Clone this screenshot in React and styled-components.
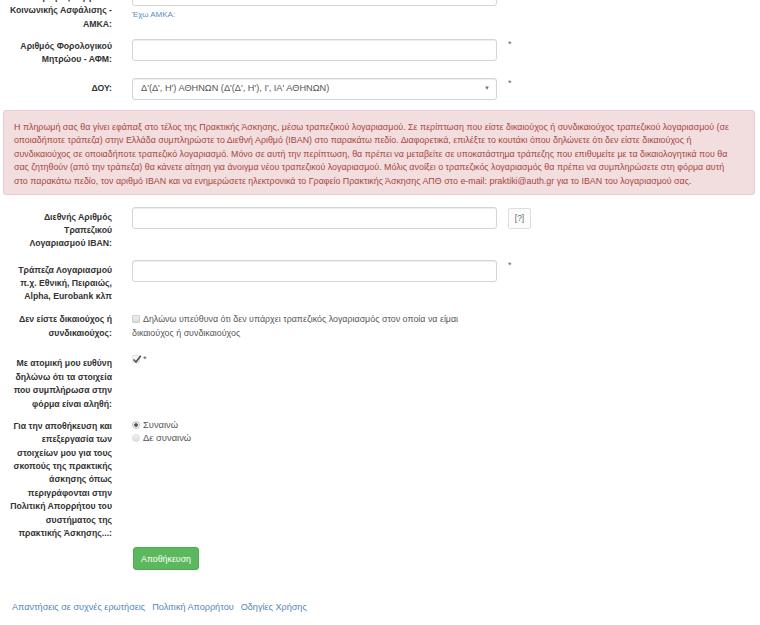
import React from "react";
import styled, { createGlobalStyle } from "styled-components";

const Global = createGlobalStyle`
  html, body { margin: 0; padding: 0; background: #fff; }
  body {
    font-family: "Liberation Sans", Arial, sans-serif;
    font-size: 9.4px;
    line-height: 13.4px;
    color: #333;
  }
`;

const Page = styled.div`
  width: 760px;
  margin-top: -16px;
  display: flow-root;
`;

const Row = styled.div`
  display: flex;
  align-items: flex-start;
  margin-top: ${(p) => p.$mt || 0}px;
`;

const Label = styled.div`
  width: 112px;
  flex: none;
  text-align: right;
  font-weight: bold;
  font-size: 8.7px;
  color: #333;
  padding-top: ${(p) => p.$pt || 0}px;
  white-space: nowrap;
`;

const Field = styled.div`
  width: 365px;
  flex: none;
  margin-left: 20px;
`;

const Side = styled.div`
  margin-left: ${(p) => (p.$ml != null ? p.$ml : 11)}px;
  flex: none;
`;

const Input = styled.div`
  box-sizing: border-box;
  height: 22px;
  border: 1px solid #d4d4d4;
  border-radius: 3px;
  background: #fff;
  box-shadow: inset 0 1px 1px rgba(0, 0, 0, 0.075);
`;

const Select = styled(Input)`
  display: flex;
  align-items: center;
  justify-content: space-between;
  padding: 0 6px 0 8px;
  color: #555;
  font-size: 9.2px;
  white-space: nowrap;
`;

const Caret = styled.span`
  font-size: 6px;
  color: #777;
`;

const Star = styled.span`
  color: #666;
  font-size: 9px;
  line-height: 10px;
  display: block;
`;

const HelpLink = styled.a`
  display: block;
  margin-top: 2px;
  font-size: 8px;
  color: #5b8dbd;
  text-decoration: none;
`;

const HelpBtn = styled.span`
  display: inline-flex;
  align-items: center;
  justify-content: center;
  box-sizing: border-box;
  width: 23px;
  height: 21px;
  margin-top: 1px;
  border: 1px solid #ddd;
  border-radius: 2px;
  background: #fcfcfc;
  color: #666;
  font-size: 8.5px;
`;

const Alert = styled.div`
  margin: 10px 5px 0 3px;
  box-sizing: border-box;
  height: 85px;
  padding: 10px 10px 5px 10px;
  background: #f2dede;
  border: 1px solid #ebccd1;
  border-radius: 3px;
  color: #a94442;
  font-size: 8.9px;
  line-height: 13.4px;
  white-space: nowrap;
  overflow: hidden;
`;

const Line = styled.div``;

const Check = styled.div`
  color: #555;
  line-height: 13.4px;
  font-size: ${(p) => p.$fs || 9.4}px;
`;

const Box = styled.span`
  display: inline-block;
  box-sizing: border-box;
  width: 8px;
  height: 8px;
  margin-right: 3px;
  vertical-align: -1px;
  border: 1px solid ${(p) => (p.$on ? "#e2e2e2" : "#cfcfcf")};
  border-radius: 1px;
  background: ${(p) => (p.$on ? "#f4f4f4" : "linear-gradient(#f0f0f0, #d9d9d9)")};
  position: relative;
`;

const Tick = styled.svg`
  position: absolute;
  left: -1px;
  top: -2px;
`;

const Dot = styled.span`
  display: inline-block;
  box-sizing: border-box;
  width: 8px;
  height: 8px;
  margin-right: 3px;
  vertical-align: -1px;
  border-radius: 50%;
  border: 1px solid ${(p) => (p.$on ? "#c4c4c4" : "#ddd")};
  background: ${(p) =>
    p.$on
      ? "radial-gradient(circle, #555 0 1.5px, #e8e8e8 2px)"
      : "linear-gradient(#f2f2f2, #dcdcdc)"};
`;

const Button = styled.button`
  margin-left: 133px;
  margin-top: 6.6px;
  width: 66px;
  height: 23px;
  padding: 0;
  border: 1px solid #4cae4c;
  border-radius: 3px;
  background: #5cb85c;
  color: #fff;
  font-family: "Liberation Sans", Arial, sans-serif;
  font-size: 8.8px;
  display: block;
`;

const Footer = styled.div`
  margin-top: 31px;
  padding-left: 12px;
  display: flex;
  gap: 7px;
  font-size: 9.1px;
`;

const FLink = styled.a`
  color: #4f86bb;
  text-decoration: none;
`;

const Lines = ({ items }) =>
  items.map((t, i) => <Line key={i}>{t}</Line>);

const alertLines = [
  "Η πληρωμή σας θα γίνει εφάπαξ στο τέλος της Πρακτικής Άσκησης, μέσω τραπεζικού λογαριασμού. Σε περίπτωση που είστε δικαιούχος ή συνδικαιούχος τραπεζικού λογαριασμού (σε",
  "οποιαδήποτε τράπεζα) στην Ελλάδα συμπληρώστε το Διεθνή Αριθμό (IBAN) στο παρακάτω πεδίο. Διαφορετικά, επιλέξτε το κουτάκι όπου δηλώνετε ότι δεν είστε δικαιούχος ή",
  "συνδικαιούχος σε οποιαδήποτε τραπεζικό λογαριασμό. Μόνο σε αυτή την περίπτωση, θα πρέπει να μεταβείτε σε υποκατάστημα τράπεζης που επιθυμείτε με τα δικαιολογητικά που θα",
  "σας ζητηθούν (από την τράπεζα) θα κάνετε αίτηση για άνοιγμα νέου τραπεζικού λογαριασμού. Μόλις ανοίξει ο τραπεζικός λογαριασμός θα πρέπει να συμπληρώσετε στη φόρμα αυτή",
  "στο παρακάτω πεδίο, τον αριθμό IBAN και να ενημερώσετε ηλεκτρονικά το Γραφείο Πρακτικής Άσκησης ΑΠΘ στο e-mail: praktiki@auth.gr για το IBAN του λογαριασμού σας.",
];

export default function App() {
  return (
    <>
      <Global />
      <Page>
        <Row>
          <Label $pt={7}>
            <Lines items={["Αριθμός Μητρώου", "Κοινωνικής Ασφάλισης -", "ΑΜΚΑ:"]} />
          </Label>
          <Field>
            <Input />
            <HelpLink href="#">Έχω ΑΜΚΑ:</HelpLink>
          </Field>
        </Row>

        <Row $mt={7.8}>
          <Label $pt={1}>
            <Lines items={["Αριθμός Φορολογικού", "Μητρώου - ΑΦΜ:"]} />
          </Label>
          <Field>
            <Input />
          </Field>
          <Side>
            <Star>*</Star>
          </Side>
        </Row>

        <Row $mt={11.2}>
          <Label $pt={4.3}>ΔΟΥ:</Label>
          <Field>
            <Select>
              <span>Δ'(Δ', Η') ΑΘΗΝΩΝ (Δ'(Δ', Η'), Ι', ΙΑ' ΑΘΗΝΩΝ)</span>
              <Caret>▼</Caret>
            </Select>
          </Field>
          <Side>
            <Star>*</Star>
          </Side>
        </Row>

        <Alert>
          <Lines items={alertLines} />
        </Alert>

        <Row $mt={12}>
          <Label $pt={3.5}>
            <Lines items={["Διεθνής Αριθμός", "Τραπεζικού", "Λογαριασμού IBAN:"]} />
          </Label>
          <Field>
            <Input />
          </Field>
          <Side>
            <HelpBtn>[?]</HelpBtn>
          </Side>
        </Row>

        <Row $mt={9.3}>
          <Label $pt={3.5}>
            <Lines
              items={["Τράπεζα Λογαριασμού", "π.χ. Εθνική, Πειραιώς,", "Alpha, Eurobank κλπ"]}
            />
          </Label>
          <Field>
            <Input />
          </Field>
          <Side>
            <Star>*</Star>
          </Side>
        </Row>

        <Row $mt={9.6}>
          <Label>
            <Lines items={["Δεν είστε δικαιούχος ή", "συνδικαιούχος:"]} />
          </Label>
          <Field>
            <Check $fs={8.9}>
              <Box />
              Δηλώνω υπεύθυνα ότι δεν υπάρχει τραπεζικός λογαριασμός στον οποία να είμαι
              <br />
              δικαιούχος ή συνδικαιούχος
            </Check>
          </Field>
        </Row>

        <Row $mt={11.5}>
          <Label $pt={5.7}>
            <Lines
              items={[
                "Με ατομική μου ευθύνη",
                "δηλώνω ότι τα στοιχεία",
                "που συμπλήρωσα στην",
                "φόρμα είναι αληθή:",
              ]}
            />
          </Label>
          <Field>
            <Check>
              <Box $on>
                <Tick width="10" height="10" viewBox="0 0 10 10">
                  <path d="M1.5 5.5 L4 8 L8.8 1.8" stroke="#555" strokeWidth="1.7" fill="none" />
                </Tick>
              </Box>
              *
            </Check>
          </Field>
        </Row>

        <Row $mt={6.9}>
          <Label $pt={2}>
            <Lines
              items={[
                "Για την αποθήκευση και",
                "επεξεργασία των",
                "στοιχείων μου για τους",
                "σκοπούς της πρακτικής",
                "άσκησης όπως",
                "περιγράφονται στην",
                "Πολιτική Απορρήτου του",
                "συστήματος της",
                "πρακτικής Άσκησης...:",
              ]}
            />
          </Label>
          <Field>
            <Check>
              <Dot $on />
              Συναινώ
            </Check>
            <Check>
              <Dot />
              Δε συναινώ
            </Check>
          </Field>
        </Row>

        <Button>Αποθήκευση</Button>

        <Footer>
          <FLink href="#">Απαντήσεις σε συχνές ερωτήσεις</FLink>
          <FLink href="#">Πολιτική Απορρήτου</FLink>
          <FLink href="#">Οδηγίες Χρήσης</FLink>
        </Footer>
      </Page>
    </>
  );
}
